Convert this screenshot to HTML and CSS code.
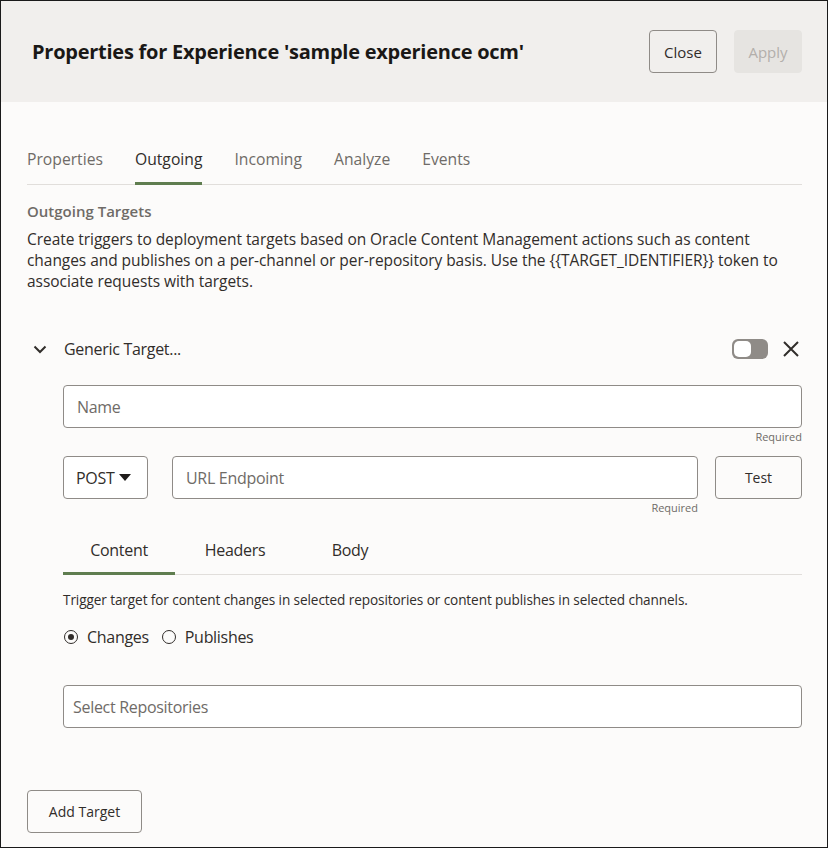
FILE: index.html
```html
<!DOCTYPE html>
<html>
<head>
<meta charset="utf-8">
<link rel="stylesheet" href="styles.css">
</head>
<body>
<div class="dialog">
  <header class="head">
    <h1 class="title">Properties for Experience 'sample experience ocm'</h1>
    <div class="head-actions">
      <button class="btn btn-close">Close</button>
      <button class="btn btn-apply">Apply</button>
    </div>
  </header>
  <main class="body">
    <nav class="tabs">
      <span class="tab">Properties</span>
      <span class="tab active">Outgoing</span>
      <span class="tab">Incoming</span>
      <span class="tab">Analyze</span>
      <span class="tab">Events</span>
    </nav>
    <h2 class="section-title">Outgoing Targets</h2>
    <p class="desc">Create triggers to deployment targets based on Oracle Content Management actions such as content changes and publishes on a per-channel or per-repository basis. Use the {{TARGET_IDENTIFIER}} token to associate requests with targets.</p>

    <div class="target">
      <div class="target-head">
        <svg class="chev" width="16" height="16" viewBox="0 0 16 16"><path d="M2.5 5.5 L8 11 L13.5 5.5" fill="none" stroke="#312d2a" stroke-width="2"/></svg>
        <span class="target-name">Generic Target...</span>
        <span class="switch"><span class="knob"></span></span>
        <svg class="xicon" width="18" height="18" viewBox="0 0 18 18"><path d="M2 2 L16 16 M16 2 L2 16" fill="none" stroke="#312d2a" stroke-width="2"/></svg>
      </div>
      <div class="target-body">
        <div class="field">
          <div class="input"><span class="ph">Name</span></div>
          <div class="req">Required</div>
        </div>
        <div class="url-row">
          <div class="select"><span>POST</span><span class="caret"></span></div>
          <div class="field grow">
            <div class="input"><span class="ph">URL Endpoint</span></div>
            <div class="req">Required</div>
          </div>
          <button class="btn btn-test">Test</button>
        </div>
        <nav class="subtabs">
          <span class="subtab active">Content</span>
          <span class="subtab">Headers</span>
          <span class="subtab">Body</span>
        </nav>
        <p class="hint">Trigger target for content changes in selected repositories or content publishes in selected channels.</p>
        <div class="radios">
          <label class="radio"><span class="circle on"></span>Changes</label>
          <label class="radio"><span class="circle"></span>Publishes</label>
        </div>
        <div class="input repo"><span class="ph">Select Repositories</span></div>
      </div>
    </div>
    <button class="btn btn-add">Add Target</button>
  </main>
</div>
</body>
</html>
```
FILE: styles.css
```css
* { box-sizing: border-box; }
html, body { margin: 0; padding: 0; }
body {
  width: 828px;
  height: 848px;
  font-family: "Open Sans", "Liberation Sans", sans-serif;
  color: #312d2a;
  background: #fcfbfa;
}
.dialog {
  width: 828px;
  height: 848px;
  border: 1px solid #1a1a1a;
  display: flex;
  flex-direction: column;
  overflow: hidden;
}
.head {
  height: 101px;
  flex: none;
  background: #f1efed;
  display: flex;
  align-items: center;
  justify-content: space-between;
  padding: 0 25px 0 31px;
}
.title {
  margin: 0;
  font-size: 20px;
  font-weight: 700;
  letter-spacing: -0.25px;
  color: #1a1816;
}
.head-actions { display: flex; gap: 17px; }
.btn {
  font-family: inherit;
  height: 43px;
  border-radius: 4px;
  font-size: 15px;
  background: transparent;
  border: 1px solid #8f8b87;
  color: #312d2a;
  padding: 0;
  cursor: pointer;
}
.btn-close { width: 68px; }
.btn-apply { width: 68px; background: #e6e4e1; border-color: #e6e4e1; color: #b3afab; }
.body {
  flex: 1;
  padding: 0 25px 0 26px;
  display: flex;
  flex-direction: column;
}
.tabs {
  display: flex;
  gap: 32px;
  margin-top: 45px;
  border-bottom: 1px solid #e1dedb;
}
.tab {
  font-size: 15.7px;
  color: #6f6b67;
  padding-bottom: 10px;
  line-height: 25px;
  border-bottom: 3px solid transparent;
  margin-bottom: -1px;
}
.tab.active { color: #312d2a; border-bottom-color: #5f7d4f; }
.section-title {
  margin: 15px 0 0;
  font-size: 15px;
  font-weight: 600;
  color: #6f6b67;
  line-height: 22px;
}
.desc {
  margin: 7px 0 0;
  font-size: 15.5px;
  line-height: 21px;
  color: #312d2a;
  letter-spacing: -0.05px;
}
.target { margin-top: 39px; }
.target-head {
  display: flex;
  align-items: center;
  height: 36px;
  padding-left: 5px;
}
.chev { flex: none; }
.target-name {
  margin-left: 16px;
  font-size: 16px;
  flex: 1;
  letter-spacing: -0.3px;
}
.switch {
  width: 36px;
  height: 20px;
  border-radius: 6px;
  background: #8f8b87;
  position: relative;
  margin-right: 14px;
}
.knob {
  position: absolute;
  left: 2px;
  top: 2px;
  width: 17px;
  height: 16px;
  border-radius: 5px;
  background: #fff;
}
.xicon { margin-right: 2px; }
.target-body {
  padding-left: 36px;
  margin-top: 18px;
}
.input {
  height: 43px;
  border: 1px solid #8f8b87;
  border-radius: 4px;
  background: #fff;
  display: flex;
  align-items: center;
  padding: 0 13px;
}
.ph { font-size: 16px; color: #6f6b67; letter-spacing: -0.3px; }
.req {
  text-align: right;
  font-size: 11px;
  color: #6f6b67;
  line-height: 18px;
}
.url-row {
  display: flex;
  margin-top: 10px;
  align-items: flex-start;
}
.select {
  width: 85px;
  height: 43px;
  border: 1px solid #8f8b87;
  border-radius: 4px;
  background: #fff;
  display: flex;
  align-items: center;
  padding: 0 12px;
  gap: 5px;
  font-size: 16px;
  letter-spacing: -0.3px;
  margin-right: 24px;
}
.caret {
  width: 0; height: 0;
  border-left: 6px solid transparent;
  border-right: 6px solid transparent;
  border-top: 7px solid #1f1c1a;
}
.grow { flex: 1; }
.btn-test { width: 87px; margin-left: 17px; font-size: 14px; }
.subtabs {
  display: flex;
  margin-top: 21px;
  border-bottom: 1px solid #e1dedb;
}
.subtab {
  font-size: 16px;
  line-height: 25px;
  padding-bottom: 9px;
  text-align: center;
  border-bottom: 3px solid transparent;
  margin-bottom: -1px;
  letter-spacing: -0.3px;
}
.subtab:nth-child(1) { width: 112px; }
.subtab:nth-child(2) { width: 120px; }
.subtab:nth-child(3) { width: 110px; }
.subtab.active { border-bottom-color: #5f7d4f; }
.hint {
  margin: 16px 0 0;
  font-size: 13.6px;
  line-height: 18px;
  letter-spacing: -0.1px;
}
.radios {
  display: flex;
  gap: 12px;
  margin-top: 17px;
  font-size: 16px;
  letter-spacing: -0.3px;
  line-height: 22px;
}
.radio { display: flex; align-items: center; gap: 9px; }
.circle {
  width: 14px;
  height: 14px;
  border: 1.5px solid #312d2a;
  border-radius: 50%;
  display: inline-flex;
  align-items: center;
  justify-content: center;
  margin-left: 1px;
}
.circle.on::after {
  content: "";
  width: 6px; height: 6px;
  border-radius: 50%;
  background: #312d2a;
}
.repo { margin-top: 37px; padding-left: 9px; }
.btn-add {
  width: 115px;
  margin-top: 62px;
  font-size: 14px;
}
```
